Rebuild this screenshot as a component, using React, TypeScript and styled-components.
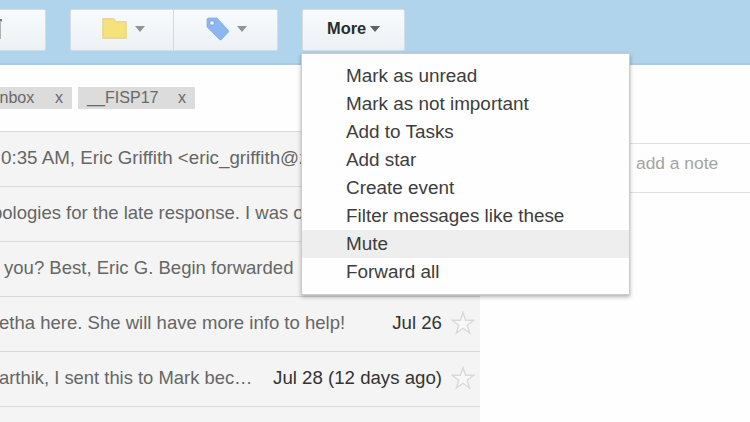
import React from "react";
import styled, { createGlobalStyle } from "styled-components";

const GlobalStyle = createGlobalStyle`
  * { box-sizing: border-box; }
  html, body { margin: 0; padding: 0; background: #fefefe; overflow: hidden; }
  body { font-family: "Liberation Sans", Arial, sans-serif; }
`;

const Page = styled.div`
  position: relative;
  width: 750px;
  height: 422px;
  overflow: hidden;
  background: #fefefe;
`;

const Toolbar = styled.header`
  display: flex;
  align-items: flex-start;
  height: 65px;
  padding-top: 9px;
  background: #b0d4ec;
  border-bottom: 2px solid #a6cbe3;
`;

const ButtonGroup = styled.div<{ $width: number; $gap: number; $shift?: number }>`
  display: flex;
  flex: none;
  width: ${(p) => p.$width}px;
  height: 42px;
  margin-left: ${(p) => p.$shift ?? 0}px;
  margin-right: ${(p) => p.$gap}px;
  border: 1px solid #d5dde2;
  border-radius: 2px;
  background: linear-gradient(#f8fbfc, #ecf1f5);
  overflow: hidden;
`;

const ToolButton = styled.button<{ $padLeft: number; $divided?: boolean }>`
  display: flex;
  align-items: center;
  flex: 1;
  margin: 0;
  padding: 0 0 3px ${(p) => p.$padLeft}px;
  border: 0;
  border-left: ${(p) => (p.$divided ? "1px solid #d3d9dd" : "0")};
  background: transparent;
  font: bold 16.4px "Liberation Sans", Arial, sans-serif;
  color: #2c2c2c;
`;

const Caret = styled.span<{ $gap: number; $dark?: boolean }>`
  flex: none;
  margin-left: ${(p) => p.$gap}px;
  border: 5px solid transparent;
  border-top: 6px solid ${(p) => (p.$dark ? "#606163" : "#929495")};
  border-bottom: 0;
`;

const Labels = styled.div`
  display: flex;
  gap: 6px;
  height: 66px;
  padding-top: 22px;
`;

const Label = styled.div<{ $width: number; $pad: number; $shift?: number }>`
  display: flex;
  align-items: center;
  justify-content: space-between;
  flex: none;
  width: ${(p) => p.$width}px;
  height: 22px;
  margin-left: ${(p) => p.$shift ?? 0}px;
  padding: 0 9px 1px ${(p) => p.$pad}px;
  background: #dcdcdc;
  font-size: 16.1px;
  color: #696969;
`;

const Content = styled.main`
  display: flex;
`;

const MessageList = styled.section`
  width: 480px;
  flex: none;
  background: #f4f4f4;
`;

const Row = styled.div`
  display: flex;
  align-items: center;
  height: 55px;
  padding: 0 5px 3px 0;
  border-top: 1px solid #d9d9d9;
  font-size: 18.65px;
  white-space: nowrap;
`;

const Snippet = styled.span<{ $shift: number; $size: number }>`
  margin-left: ${(p) => p.$shift}px;
  font-size: ${(p) => p.$size}px;
  color: #666;
`;

const DateText = styled.span`
  margin-left: auto;
  color: #333;
`;

const Star = styled.svg`
  flex: none;
  width: 24px;
  height: 24px;
  margin-left: 9px;
`;

const SidePanel = styled.aside`
  flex: 1;
  padding-top: 12px;
`;

const Note = styled.div`
  display: flex;
  align-items: center;
  height: 50px;
  padding: 0 0 9px 156px;
  border-top: 1px solid #dedede;
  border-bottom: 1px solid #dedede;
  font-size: 17.4px;
  color: #a3a3a3;
`;

const Menu = styled.ul`
  position: absolute;
  left: 301px;
  top: 53px;
  width: 329px;
  height: 242px;
  margin: 0;
  padding: 8px 0 0;
  list-style: none;
  background: #fefefe;
  border: 1px solid #cbcbcb;
  box-shadow: 0 2px 4px rgba(0, 0, 0, 0.3);
`;

const MenuItem = styled.li<{ $active?: boolean }>`
  height: 28px;
  padding-left: 44px;
  background: ${(p) => (p.$active ? "#eee" : "transparent")};
  font-size: 18.9px;
  line-height: 28px;
  color: #3d3d3d;
`;

const StarIcon = () => (
  <Star viewBox="0 0 24 24">
    <path
      d="M12 1.5 14.6 9.2 22.8 9.3 16.2 14.2 18.6 22 12 17.3 5.4 22 7.8 14.2 1.2 9.3 9.4 9.2Z"
      fill="#f8f8f8"
      stroke="#d9d9d9"
      strokeWidth="1.4"
    />
  </Star>
);

const TrashIcon = () => (
  <svg width="3" height="23" viewBox="0 0 3 23">
    <path d="M0 2h2v2.5H0z" fill="#808080" />
    <path d="M0 5h1v17H0z" fill="#b0b0b0" />
  </svg>
);

const FolderIcon = () => (
  <svg width="25" height="21" viewBox="0 0 25 21">
    <path
      d="M1 1H11.5L14 4H24V20H1Z"
      fill="#f6e27b"
      stroke="#edd795"
      strokeWidth="1.8"
      strokeLinejoin="round"
    />
  </svg>
);

const TagIcon = () => (
  <svg width="24" height="24" viewBox="0 0 24 24">
    <path
      d="M2 1H11L22.5 13.5Q23 14.5 22.3 15.2L15.5 22.5Q14.5 23.3 13.5 22.4L1 10V2Z"
      fill="#8cb6ee"
      stroke="#7faae0"
      strokeWidth=".7"
    />
    <rect x="4" y="4" width="4" height="4" rx="1" fill="#f2f8ff" stroke="#719bd2" strokeWidth=".7" />
  </svg>
);

const messages = [
  { text: "0:35 AM, Eric Griffith <eric_griffith@z", shift: 1, size: 18.75 },
  { text: "pologies for the late response. I was o", shift: -8, size: 18.5 },
  { text: "you? Best, Eric G. Begin forwarded", shift: 4, size: 18.55 },
  { text: "etha here. She will have more info to help!", shift: -1, size: 18.55, date: "Jul 26" },
  { text: "arthik, I sent this to Mark bec…", shift: -1, size: 18.4, date: "Jul 28 (12 days ago)" },
];

const menuItems = [
  "Mark as unread",
  "Mark as not important",
  "Add to Tasks",
  "Add star",
  "Create event",
  "Filter messages like these",
  "Mute",
  "Forward all",
];

export default function App() {
  return (
    <Page>
      <GlobalStyle />
      <Toolbar>
        <ButtonGroup $width={50} $gap={24} $shift={-4}>
          <ToolButton $padLeft={3} aria-label="Delete">
            <TrashIcon />
          </ToolButton>
        </ButtonGroup>
        <ButtonGroup $width={208} $gap={24}>
          <ToolButton $padLeft={31} aria-label="Move to">
            <FolderIcon />
            <Caret $gap={8} />
          </ToolButton>
          <ToolButton $padLeft={32} $divided aria-label="Labels">
            <TagIcon />
            <Caret $gap={7} />
          </ToolButton>
        </ButtonGroup>
        <ButtonGroup $width={103} $gap={0}>
          <ToolButton $padLeft={24}>
            More
            <Caret $gap={4} $dark />
          </ToolButton>
        </ButtonGroup>
      </Toolbar>
      <Labels>
        <Label $width={77} $pad={0} $shift={-5}>
          <span>Inbox</span>
          <span>x</span>
        </Label>
        <Label $width={117} $pad={9}>
          <span>__FISP17</span>
          <span>x</span>
        </Label>
      </Labels>
      <Content>
        <MessageList>
          {messages.map((m) => (
            <Row key={m.text}>
              <Snippet $shift={m.shift} $size={m.size}>
                {m.text}
              </Snippet>
              {m.date && (
                <>
                  <DateText>{m.date}</DateText>
                  <StarIcon />
                </>
              )}
            </Row>
          ))}
          <Row />
        </MessageList>
        <SidePanel>
          <Note>add a note</Note>
        </SidePanel>
      </Content>
      <Menu>
        {menuItems.map((item) => (
          <MenuItem key={item} $active={item === "Mute"}>
            {item}
          </MenuItem>
        ))}
      </Menu>
    </Page>
  );
}
